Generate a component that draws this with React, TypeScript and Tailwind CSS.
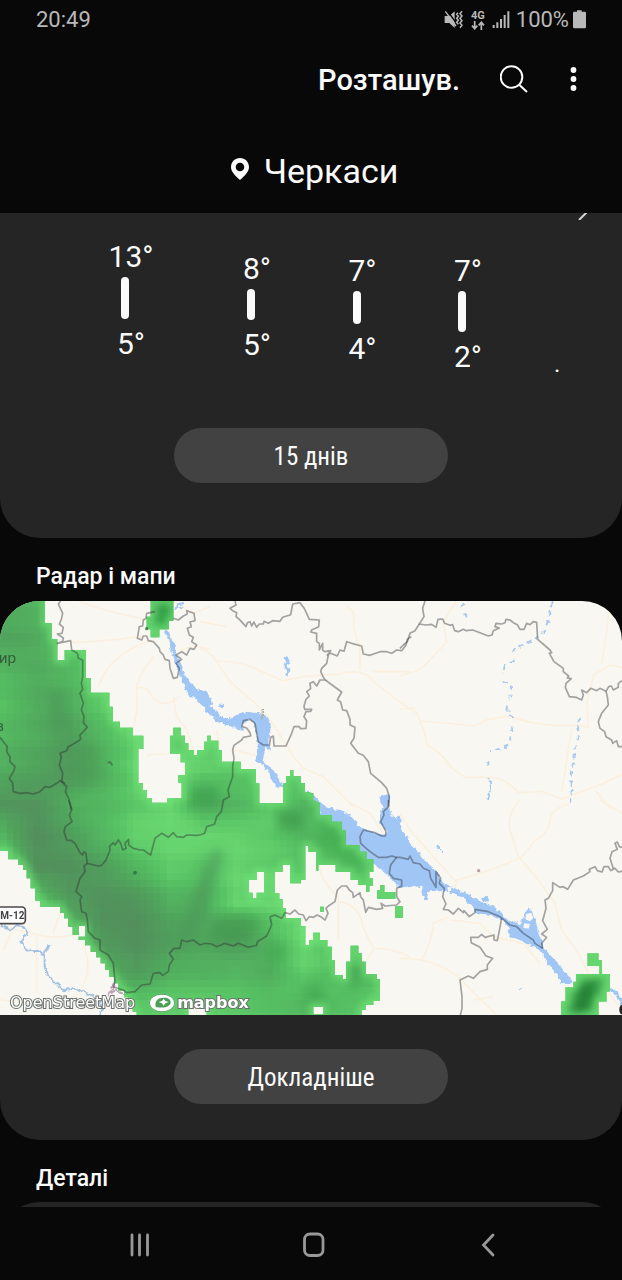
import React from "react";

type Day = { high: string; low: string; offset: string; bar: string };

const days: Day[] = [
  { high: "13°", low: "5°", offset: "pt-7", bar: "h-[42px]" },
  { high: "8°", low: "5°", offset: "pt-10", bar: "h-[31px]" },
  { high: "7°", low: "4°", offset: "pt-[42px]", bar: "h-[33px]" },
  { high: "7°", low: "2°", offset: "pt-[42px]", bar: "h-[41px]" },
];

function StatusBar() {
  return (
    <div className="flex h-10 items-center justify-between pr-9 pl-9 text-[22px] leading-6 text-[#b9b9b9]">
      <span>20:49</span>
      <div className="flex items-center gap-[6px]">
        <svg width="20" height="20" viewBox="0 0 60 60" fill="#b9b9b9" aria-label="Вібрація">
          <path d="M2 18h14l16-14v50L16 39H2z" />
          <path d="M9 1l32 44" stroke="#080808" strokeWidth="4" />
          <path d="M4 4l32 44" fill="none" stroke="#b9b9b9" strokeWidth="4" />
          <path d="M42 8l-4 5 5 6-5 6 5 6-5 6 5 6M54 4l-6 7 6 7-6 7 6 7-6 7 6 7-6 7" fill="none" stroke="#b9b9b9" strokeWidth="4.500" />
        </svg>
        <span className="flex w-4 flex-col items-center text-[11px] leading-[10px] font-bold">
          4G
          <svg width="14" height="9" viewBox="0 0 42 27" fill="none" stroke="#b9b9b9" strokeWidth="5">
            <path d="M11 0v23M3 14l8 9 8-9M31 27V4M23 13l8-9 8 9" />
          </svg>
        </span>
        <svg width="18" height="20" viewBox="0 0 54 60" fill="#b9b9b9" aria-label="Сигнал">
          <path d="M2 45h6v9H2zM13 37h6v17h-6zM24 27h6v27h-6zM35 15h6v39h-6zM46 4h6v50h-6z" />
        </svg>
        <span className="flex items-center gap-1">
          100%
          <svg width="13" height="20" viewBox="0 0 39 60" fill="#b9b9b9" aria-label="Батарея">
            <path d="M4 5h8V1h14v4h9q4 0 4 4v42q0 4-4 4H4q-4 0-4-4V9q0-4 4-4z" />
          </svg>
        </span>
      </div>
    </div>
  );
}

function Header() {
  return (
    <header className="bg-[#080808]">
      <StatusBar />
      <div className="flex h-20 items-center justify-end pr-8">
        <button className="mr-10 text-[29px] leading-8 font-medium">Розташув.</button>
        <button aria-label="Пошук" className="mr-7">
          <svg width="30" height="30" viewBox="0 0 30 30" fill="none" stroke="#fafafa" strokeWidth="2">
            <circle cx="11.500" cy="12" r="10.800" />
            <path d="M19.200 19.700l7.800 7.300" />
          </svg>
        </button>
        <button aria-label="Більше">
          <svg width="32" height="32" viewBox="0 0 32 32" fill="#fafafa">
            <circle cx="15.500" cy="6" r="2.900" />
            <circle cx="15.500" cy="15" r="2.900" />
            <circle cx="15.500" cy="24" r="2.900" />
          </svg>
        </button>
      </div>
      <div className="flex h-[93px] items-center justify-center gap-[14px] pt-2 pl-[6px]">
        <svg width="20" height="24" viewBox="0 0 20 24" fill="#fafafa" className="mb-1">
          <path fillRule="evenodd" d="M10 1c5.100 0 9 3.900 9 9 0 4.600-3.500 8-9 13-5.500-5-9-8.400-9-13 0-5.100 3.900-9 9-9zm0 4.700a4.300 4.300 0 1 0 0 8.600 4.300 4.300 0 0 0 0-8.600z" />
        </svg>
        <h1 className="text-[34px] leading-10">Черкаси</h1>
      </div>
    </header>
  );
}

const pill =
  "mx-auto flex h-[55px] w-[44%] items-center justify-center rounded-full bg-[#424242] pt-[2px] font-['Roboto_Condensed',Roboto,sans-serif] text-[25px] leading-7";

const sectionTitle = "px-9 text-[23px] leading-7 font-medium";

function Forecast() {
  return (
    <section className="relative rounded-b-[40px] bg-[#252525] pb-[55px]">
      <svg className="absolute top-0 right-[34px]" width="10" height="7" viewBox="0 0 10 7">
        <path d="M1 7L9 -1" stroke="#d5d5d5" strokeWidth="2" />
      </svg>
      <div className="grid h-[215px] grid-cols-[146fr_106fr_105fr_106fr_101fr] pl-[58px]">
        {days.map((d, i) => (
          <div key={i} className={`flex flex-col items-center text-[30px] leading-8 ${d.offset}`}>
            <span>{d.high}</span>
            <span className={`mt-1 mr-3 mb-[9px] w-2 rounded-full bg-[#fafafa] ${d.bar}`} />
            <span>{d.low}</span>
          </div>
        ))}
        <span className="pt-[139px] pl-[33px] text-2xl leading-6">.</span>
      </div>
      <button className={pill}>15 днів</button>
    </section>
  );
}

/* Map geometry: drawn on 3x tiles with origins at 0/600/1200 by 0/600. */
const shift = (dx: number, dy: number, pts: string) =>
  pts
    .trim()
    .split(/\s+/)
    .map((p) => {
      const [x, y] = p.split(",").map(Number);
      return `${x + dx},${y + dy}`;
    })
    .join(" ");

const rain = [
  "-80,-80",
  shift(0, 0, "135,-80 135,70 155,70 155,118 172,118 172,180 194,180 194,150 258,150 258,235 272,235 272,278 328,278 328,320 338,320 338,365 360,365 360,383 398,383 398,407 430,407 430,447 415,447 415,550 428,550 428,570 440,570 440,595 455,595 455,608 502,608 502,595 545,595 545,548 535,548 535,525 555,525 555,487 542,487 542,462 510,462 510,407 520,407 520,383 542,383 542,407 555,407 555,430 565,430 565,450 582,450 582,465 592,465 592,450 612,450 612,425 622,425 622,407 633,407 633,422 655,422"),
  shift(600, 0, "55,450 66,450 66,485 122,485 122,508 168,508 168,550 178,550 178,610 250,610 250,550 258,550 258,528 270,528 270,510 280,510 280,528 302,528 302,550 315,550 315,575 340,580 340,600"),
  shift(600, 600, "360,10 360,45 395,45 395,65 425,65 425,90 437,90 437,135 480,135 480,155 500,155 500,178 520,178 520,215 508,215 508,235 518,235 518,258 508,258 508,275 498,275 498,255 475,255 475,240 452,240 452,215 407,215 407,195 355,195 355,213 348,213 348,155 325,155 325,137 316,137 316,240 303,240 303,250 270,250 270,195 248,195 248,215 225,215 225,280 238,280 238,298 248,298 248,325 258,325 258,355 303,355 303,378 316,378 316,435 328,435 328,420 340,420 340,398 360,398 360,420 382,420 382,440 395,440 395,480 405,480 405,525 428,525 428,538 438,538 438,485 452,485 452,437 475,437 475,460 485,460 485,485 497,485 497,522 530,522 530,538 540,538 540,603 520,603 520,615 497,615 497,630 485,630 485,720"),
  shift(0, 600, "410,720 410,635 398,635 398,615 385,615 385,592 372,592 372,572 355,572 355,550 342,550 342,530 328,530 328,510 315,510 315,490 302,490 302,472 288,472 288,455 272,455 272,436 255,436 255,420 236,420 236,405 218,405 218,380 205,380 205,355 192,355 192,338 180,338 180,320 120,320 120,302 105,302 105,265 92,265 92,235 80,235 80,210 70,210 70,195 55,195 55,178 25,178 25,153 -80,153"),
].join(" L");

const holes =
  "M747,840 770,840 770,815 792,815 792,878 770,878 770,895 758,895 758,878 747,878Z M236,978 256,978 256,1010 236,1010Z M565,1226 580,1226 580,1214 592,1214 592,1226 620,1226 620,1250 565,1250Z M940,1220 970,1220 970,1242 940,1242Z";

const specks =
  "M1132,870 1140,870 1140,855 1153,855 1153,876 1186,876 1186,896 1132,896Z M1186,918 1208,918 1208,954 1186,954Z M960,920 972,920 972,936 960,936Z M452,0 520,0 520,62 506,62 506,88 478,88 478,112 452,112 452,88 440,88 440,50 452,50Z M1762,1060 1796,1060 1796,1080 1806,1080 1806,1122 1830,1122 1830,1175 1820,1175 1820,1205 1796,1205 1796,1250 1683,1250 1683,1204 1696,1204 1696,1162 1720,1162 1720,1145 1728,1145 1728,1122 1798,1122 1798,1098 1762,1098Z";

/* Rain intensity (0 light, 9 heavy), one sample every 100 map units. */
const intensity = [
  [5, 4, 3, 2, 3, 6, 3, 3, 3, 3, 3, 3],
  [6, 5, 2, 2, 2, 3, 2, 2, 2, 2, 2, 2],
  [4, 5, 4, 2, 2, 2, 2, 2, 2, 2, 2, 2],
  [3, 5, 5, 2, 1, 2, 2, 2, 2, 2, 2, 2],
  [4, 5, 7, 4, 1, 3, 2, 1, 1, 1, 1, 1],
  [5, 6, 8, 5, 1, 1, 2, 2, 2, 3, 1, 1],
  [8, 8, 5, 4, 2, 1, 5, 4, 2, 4, 3, 1],
  [4, 9, 7, 4, 1, 1, 1, 1, 2, 4, 4, 3],
  [1, 8, 9, 7, 4, 2, 3, 1, 2, 3, 3, 3],
  [1, 2, 7, 9, 8, 5, 5, 1, 1, 2, 3, 3],
  [1, 1, 4, 8, 9, 7, 6, 7, 4, 1, 3, 3],
  [1, 1, 1, 5, 7, 5, 5, 4, 5, 2, 3, 4],
  [1, 1, 1, 1, 2, 2, 2, 2, 3, 4, 3, 2],
  [1, 1, 1, 1, 2, 2, 2, 2, 3, 4, 3, 2],
];

const ramp = [
  [112, 224, 118],
  [86, 192, 99],
  [80, 164, 92],
  [82, 143, 92],
];

const CELL = 20;

function rainColor(x: number, y: number) {
  const gx = Math.min(x / 100, 10.99);
  const gy = Math.min(y / 100, 12.99);
  const ix = Math.floor(gx);
  const iy = Math.floor(gy);
  const fx = gx - ix;
  const fy = gy - iy;
  const top = intensity[iy][ix] * (1 - fx) + intensity[iy][ix + 1] * fx;
  const bottom = intensity[iy + 1][ix] * (1 - fx) + intensity[iy + 1][ix + 1] * fx;
  const banding = Math.sin(x * 12.9) * 0.22 + Math.sin(y * 7.3) * 0.22;
  const v = Math.max(0, Math.min(8.99, top * (1 - fy) + bottom * fy + banding)) / 3;
  const k = Math.floor(v);
  const f = v - k;
  const rgb = ramp[k].map((c, i) => Math.round(c * (1 - f) + ramp[k + 1][i] * f));
  return `rgb(${rgb.join(",")})`;
}

const cells: { x: number; y: number; fill: string }[] = [];
for (let y = 0; y < 1260; y += CELL) {
  for (let x = 0; x < 1220; x += CELL) {
    cells.push({ x, y, fill: rainColor(x, y) });
  }
}

const upperRiver = [
  shift(0, 0, "495,85 505,95 520,125 530,165 545,195 555,225 575,255"),
  shift(600, 0, "0,270 15,275 30,295 38,312 28,318 45,330 65,350 85,358 110,345 140,335 175,340 200,352 212,375 208,430 212,450 195,440 192,465 188,485 205,500 225,515 240,545 258,550 255,563 232,563 218,545 205,515 185,492 165,485 170,460 175,440 168,400 165,370 145,358 130,370 130,390 100,385 80,375 50,365 25,340 0,310"),
  shift(0, 0, "580,290 562,285 550,250 535,215 525,185 512,150 508,120 495,95"),
].join(" ");

const reservoir = [
  shift(600, 600, "315,-30 335,-20 355,0 365,10 385,25 420,30 450,45 475,75 500,90 540,102 558,105 560,95 540,70 540,45 548,20 538,-5 548,-18 570,-15 568,15 570,40 590,60 600,45"),
  shift(1200, 600, "4,90 14,100 30,130 55,155 75,185 110,215 125,245 155,260 185,275 210,285 240,305 280,318 300,335 325,365 350,365 370,355 380,330 388,320 400,345 408,365 415,400 430,440 450,465 480,495 505,525 518,545 510,552 485,552 470,520 445,495 425,455 400,440 370,425 325,408 330,385 305,360 270,345 230,340 215,315 180,290 160,280 130,270 105,272 85,275 80,300 72,300 65,262 40,258 15,265"),
  shift(600, 600, "590,258 565,225 520,190 480,160 437,135 425,100 395,70 360,45 325,0"),
].join(" ");

type Tile = { at: string; lines: string[] };

const roads: Tile[] = [
  {
    at: "translate(0 0)",
    lines: [
      "M230 0q60 25 115 38t90 20M215 128q100-4 210-18M295 260q20-60 70-95t90-42M460 170q-50 60-50 100 4 70-10 115M410 265q25-10 40 15t35 28q30 8 55-22M520 290l10 60 30 40 25 70M440 468q30-10 60-5M510 0l70 40 50-20M540 150l50-12 40 10",
    ],
  },
  {
    at: "translate(600 0)",
    lines: [
      "M0 145q30 10 50 38 70 2 110 20t90 40q40-12 100-16l70-5q30-10 60-4t40 26q40 30 70 55l35 25h20M50 185l40 60 70 60 40 40 40 60 40 65 30 35 60 25 50 50 40 40M0 65l80 15M440 20q30 10 20 60l20 70v60M520 215h110M50 390l10 50M100 450l80 20",
    ],
  },
  {
    at: "translate(1200 0)",
    lines: [
      "M0 226q60-10 85-40t55-60l-10-60 40-66M0 328q50-10 60 35 80 5 165 15l40-20 70-10q30 20 130 28h65l40 5M60 365q20 40 20 70 40 20 60 50t60 48q70-5 100 5t55 40q40 0 70-5l60 25q50-20 120-45l62-30M515 385l-20 130-10 60M565 385l-4-80 20-80 50-30 35 8M625 0v60l-20 130M585 570l50 60",
    ],
  },
  {
    at: "translate(0 600)",
    lines: ["M0 380q60 10 110 24t120 0M110 400v180M180 340l-20 60M10 450l25-55M250 430q20 60 10 100t-50 70M0 600l180 20"],
  },
  {
    at: "translate(600 600)",
    lines: ["M355 190q10 60 60 100v130M420 305q60 10 70 80l30 60q60 0 110 25M500 480l20-30M450 10l60 30 40 60"],
  },
  {
    at: "translate(1200 600)",
    lines: [
      "M0 40l30 50 70 80 65 72q110-30 200-70l40-50q40-20 45-60t60-50M360 0q-40 40-30 90l25 80 60 70 50 70 20 80 50 70 30 60M0 475q60 0 100 15t75 40q40 45 115 115M65 480q30-50 35-110l45-20M150 360l90 10 40 40 90 20 50 60M220 600l60-10M600 0l66 40M620 570l46 60M170 240l-8 40",
    ],
  },
];

const borders: Tile[] = [
  {
    at: "translate(0 0)",
    lines: [
      "182,3 175,12 188,40 184,58 178,72 190,82 186,100 172,102 190,114 188,124 172,130 212,122 215,150 232,160 235,175 248,180 248,230 244,250 248,268 240,280 250,310 244,330 252,350 250,368 262,382 240,405 242,418 220,432 205,440 200,452 180,460 184,470 178,495 188,520 185,545 200,560 196,575 206,595 215,630",
      "0,412 22,440 20,455 30,470 30,485 45,500 42,512 28,535 38,550 40,575 60,580 80,578 100,582 120,575 135,560 150,562 170,550 180,542 195,550",
      "465,35 440,40 438,55 430,60 428,78 418,80 412,115 425,120 430,108 440,108 445,122 460,125 478,145 480,155 490,165 495,178 508,182 510,205 520,235 532,232 538,205 528,190 545,178 528,165 545,155 560,165 570,145 582,148 590,135 575,125 580,112 568,105 562,85 574,80 570,66 585,62 582,40 560,32 562,42 550,48 535,60 520,55",
      "323,488 331,486 337,496",
    ],
  },
  {
    at: "translate(600 0)",
    lines: [
      "105,3 108,15 90,25 98,32 110,38 108,50 118,58 138,80 142,68 150,65 155,78 162,66 170,82 178,72 190,72 192,64 205,70 218,62 240,64 248,52 272,44 278,12 300,8 312,24 320,40 328,58 358,60 356,80 335,90 332,96 350,100 350,125 358,130 358,150 368,130 368,150 374,155 392,152 382,165 392,160 412,168 420,150 432,154 440,125 455,130 485,138 490,162 510,166 540,155 560,155 575,160 590,150 605,152 618,135 622,118 634,110",
      "385,165 380,190 365,205 362,215 372,235 376,240 360,240 350,258 340,245 330,250 332,266 320,275 328,288 318,298 312,318 314,328 335,328 332,334 318,335 312,350 320,362 318,385 302,386 298,380 282,380 275,400 258,438 222,438 220,408 212,412 208,435 190,435 175,425 170,400 165,370 150,358 130,362 126,380 140,384 150,398 152,408 130,412 125,420 102,436 98,450 102,475 98,500 98,530 84,570 88,590 70,600 64,635 50,650 44,672 20,680 14,700 0,705",
      "376,240 392,252 425,276 412,300 422,306 428,330 440,332 450,358 450,375 465,382 462,415 452,430 475,460 490,466 505,485 512,520 545,548 560,565 568,590 565,620",
    ],
  },
  {
    at: "translate(1200 0)",
    lines: [
      "75,3 68,25 72,50 58,72 78,75 95,73 108,82 114,58 128,57 134,70 150,76 158,74 164,92 175,95 190,88 198,92 218,90 240,98 265,108 276,105 280,92 298,84 285,80 288,70 305,72 315,68 318,58 330,60 340,68 352,74 360,88 372,88 380,70 390,74 400,65 410,67 413,118 450,150 455,158 448,160 462,185 490,205 490,215 506,228 502,234 514,236 498,250 496,262 508,290 528,292 545,300 550,285 545,270 560,278 572,265 590,272 600,265 618,274 626,260 634,258 640,270 655,262 655,250 666,242",
      "58,72 45,92 30,100 22,125 10,135 0,145",
      "618,274 622,290 625,315 605,340 595,365 600,385 614,395 618,410 635,420 638,430 650,422 655,440 666,440",
    ],
  },
  {
    at: "translate(0 600)",
    lines: [
      "206,0 215,30 208,45 216,65 196,80 192,95 200,120 215,122 225,130 240,158 248,165 252,155 258,160 262,190 295,198 305,196 318,180 330,150 328,140 340,128 345,135 355,120 362,130 368,150 378,145 375,130 386,118 386,135 400,145 420,150 430,150 452,165 465,115 485,100 505,112 520,98 530,110 550,112 560,105 590,106 600,105",
      "262,190 252,198 255,215 240,235 228,275 245,290 240,300 245,335 258,340 262,360 265,395 285,415 300,420 300,450 325,465 340,490 345,545 340,560 370,570 380,578 405,575 425,555 450,552 460,520 480,518 488,526 505,515 508,495 520,478 508,460 522,445 540,445 545,420 560,425 580,420 600,435",
    ],
  },
  {
    at: "translate(600 600)",
    lines: [
      "0,435 15,430 35,432 50,440 75,430 100,438 115,430 145,442 170,436 172,425 200,408 215,375 210,350 225,345 245,355 255,338 270,342 285,330 296,342 310,345 318,362 328,350 340,352 352,345 365,352 375,360 384,340 378,325 385,318 405,305 412,270 425,258 440,258 448,270 458,278 460,292 480,278 482,290 490,300 497,337 505,322 530,328 548,325 543,310 555,318 590,315 600,305 590,290 590,265 605,258 605,240 580,235 568,220 572,195 590,172",
      "565,0 566,20 550,35 552,45 542,65 558,95 556,108 545,108 525,98 490,90 480,110 482,130 510,155 535,172 560,172 575,168 590,172 600,172",
    ],
  },
  {
    at: "translate(1200 600)",
    lines: [
      "0,172 25,178 30,168 40,188 60,192 70,205 88,212 92,235 108,262 108,215 122,235 118,250 133,265 128,290 138,312 130,328 145,330 160,342 175,325 190,338 192,332 208,350 225,338 225,328 265,335 300,350 330,375 350,380 370,400 400,420 405,430 428,445",
      "428,445 425,430 440,412 425,402 442,388 428,362 438,325 435,300 445,295 458,272 458,248 480,262 490,260 503,268 520,240 550,228 570,215 568,208 585,200 592,212 606,216 612,200 625,200 632,212 645,205 655,216 666,214",
      "640,206 630,175 636,155 652,148 645,130 652,126 658,140 666,142",
      "305,355 298,392 292,422 282,420 282,405 255,412 245,403 235,412 212,412 214,428 240,442 258,468 278,475 262,495 262,508 240,515 220,535 205,528 180,540 186,590 186,625 180,650",
    ],
  },
];

function RadarMap() {
  const rainPath = `M${rain}Z ${holes} ${specks}`;
  return (
    <svg className="block w-full" viewBox="0 3 1866 1242" role="img" aria-label="Радар опадів">
      <defs>
        <clipPath id="rain">
          <path d={rainPath} clipRule="evenodd" />
        </clipPath>
        <filter id="soft" x="-50%" y="-50%" width="200%" height="200%">
          <feGaussianBlur stdDeviation="16" />
        </filter>
        <filter id="edge">
          <feGaussianBlur stdDeviation="9" />
        </filter>
        <filter id="ragged" x="-5%" y="-5%" width="110%" height="110%">
          <feTurbulence type="fractalNoise" baseFrequency="0.07" numOctaves="2" seed="4" />
          <feDisplacementMap in="SourceGraphic" scale="16" xChannelSelector="R" yChannelSelector="G" />
        </filter>
      </defs>
      <rect width="1866" height="1250" fill="#f8f7f2" />
      <g fill="none" stroke="#fbf0de" strokeWidth="5" strokeLinejoin="round">
        {roads.map((t) => (
          <g key={t.at} transform={t.at}>
            {t.lines.map((d) => (
              <path key={d} d={d} />
            ))}
          </g>
        ))}
      </g>

      <g fill="#9fc6f5" filter="url(#ragged)">
        <path d={`M${upperRiver}Z`} />
        <path d={`M${reservoir}Z`} />
        <path d="M658 310l14 2-4 10-10-2zM1444 890l18 2 2 12-18 2z" />
        <path d="M785 328l4-2v34h-5z" fill="#aaa" />
      </g>
      <g fill="#f8f7f2">
        <path d="M1578 942l16-4 6 16-10 10-14-6zM1572 970l18 2-4 14-16-2zM1342 862l10-2 2 12-10 2zM1556 962l10 4-6 10-8-4z" />
      </g>
      <g fill="none" stroke="#9fc6f5" strokeWidth="6" filter="url(#ragged)">
        <path d="M858 170l6 16-6 14 8 14-6 12" strokeWidth="9" />
        <path d="M525 28l10-14 16-6M540 20l8 6" />
        <path
          d="M1656 6l-6 26-10 44-8 22-38 24-50 22-8 10M1544 182l-30 14-6 24M1508 246l24 8 2 24-6 20M1518 318l10 26 16 12M1534 380l-4 50-20 14-40 10M1462 484v12M1394 38l6 14M1380 20l20-8M1742 354l-12 22 8 28-14 40 0 40-12 38 4 44-6 40"
          strokeDasharray="16 12"
          stroke="#a9c8ee"
        />
        <path d="M1468 534l4 26-8 42M1310 738l14 12 4 8M1558 1168l8-8" strokeWidth="5" />
        <path d="M1820 1165l20 8 26 30v20" strokeWidth="10" />
      </g>
      <g fill="none" stroke="#a3c1e2" strokeWidth="6" filter="url(#ragged)">
        <path d="M0 975l30 16 20-15 20 2 10 22-16 22 10 20 20 12 24-2 16 16v30l12 30 20 20 24 22 36-4 30 12 24 10 20 22 6 20-8 20M130 1068l16-34" />
        <path d="M330 1180l14-30M325 1185l20-14 30 12" stroke="#bda5b8" />
      </g>

      <g clipPath="url(#rain)">
        <rect x="0" y="0" width="1866" height="1250" fill="#5bc665" />
        <g shapeRendering="crispEdges">
          {cells.map((c) => (
            <rect key={`${c.x}-${c.y}`} x={c.x} y={c.y} width={CELL} height={CELL} fill={c.fill} />
          ))}
        </g>
        <g filter="url(#soft)">
          <path d="M640 750l30 0-50 180-40 100-50-10 40-110z" fill="#4b9858" opacity="0.7" />
          <path d="M570 560l80 0 10 60-90 5z" fill="#40a04f" opacity="0.8" />
          <path d="M830 630l80 0 5 60-80 0z" fill="#3f9a4e" opacity="0.8" />
          <path d="M640 960l90-15 60 20-50 60-110-5z" fill="#45994f" opacity="0.7" />
          <path d="M145 270l50 0 10 110-50 20z" fill="#4c9958" opacity="0.7" />
          <path d="M210 440l80-10 10 110-80 20z" fill="#4c9958" opacity="0.5" />
          <path d="M800 1030l50 0 0 60-50 0zM1045 1070l40 20-10 80-30 0zM900 1160l60-20 20 60-50 20z" fill="#43a551" opacity="0.7" />
          <path d="M970 660l70 40 60 110-60-20-90-60z" fill="#42ae4f" opacity="0.7" />
          <path d="M1735 1150l70-20-40 110-60 20z" fill="#238035" />
          <path d="M490 0h20v80h-40z" fill="#239a3c" />
        </g>
        <path d={rainPath} fill="none" stroke="#70e577" strokeWidth="24" opacity="0.6" filter="url(#edge)" />
      </g>

      <g fill="none" stroke="#302c32" strokeOpacity="0.42" strokeWidth="5" strokeLinejoin="round">
        {borders.map((t) => (
          <g key={t.at} transform={t.at}>
            {t.lines.map((d) => (
              <polyline key={d} points={d} />
            ))}
          </g>
        ))}
      </g>
      <g fill="#28733c" opacity="0.8">
        <circle cx="405" cy="818" r="6" />
        <circle cx="440" cy="86" r="5" />
        <circle cx="1436" cy="812" r="5" fill="#a48d92" />
      </g>
      <path d="M1866 1215q-8 2-8 14t8 14z" fill="#222" />
      <g className="font-[Roboto,sans-serif]" fill="#315f3b" fontSize="46">
        <text x="-4" y="190">ир</text>
        <text x="-14" y="392">в</text>
      </g>
      <rect x="-20" y="921" width="96" height="50" rx="10" fill="#fff" stroke="#4b4b4b" strokeWidth="5" />
      <text x="1" y="957" className="font-[Roboto,sans-serif] font-bold" fontSize="30" fill="#444">М-12</text>
    </svg>
  );
}

function Attribution() {
  const outline = "text-white [-webkit-text-stroke:2px_#6b726d] [paint-order:stroke_fill]";
  return (
    <div className="absolute bottom-[2px] left-[10px] flex items-center gap-[14px] font-['DejaVu_Sans',sans-serif] text-[16px] leading-5">
      <a href="#osm" className={outline}>OpenStreetMap</a>
      <a href="#mapbox" className={`flex items-center gap-[2px] font-bold ${outline}`}>
        <svg width="26" height="18" viewBox="0 0 78 54">
          <ellipse cx="39" cy="27" rx="36" ry="25" fill="#fff" stroke="#65846b" strokeWidth="3" />
          <path d="M20 39c-4-18 6-28 25-28 13 0 20 6 20 14 0 13-18 19-45 14z" fill="#4d9f57" />
          <path d="M44 14l5 7 10 3-10 4-5 7-5-7-10-4 10-3z" fill="#fff" />
        </svg>
        <span>mapbox</span>
      </a>
    </div>
  );
}

function BottomNav() {
  return (
    <nav className="grid h-[73px] grid-cols-3 items-center justify-items-center bg-[#080808] pr-[47px] pl-[53px]">
      <button aria-label="Останні">
        <svg width="28" height="28" viewBox="0 0 28 28" stroke="#989898" strokeWidth="2.800" strokeLinecap="round">
          <path d="M6 5v20M13.500 5v20M21.500 5v20" />
        </svg>
      </button>
      <button aria-label="Головний екран">
        <svg width="28" height="28" viewBox="0 0 28 28" fill="none" stroke="#989898" strokeWidth="2.800">
          <rect x="4.500" y="4" width="18.500" height="21.500" rx="5.500" />
        </svg>
      </button>
      <button aria-label="Назад">
        <svg width="28" height="28" viewBox="0 0 28 28" fill="none" stroke="#989898" strokeWidth="2.800" strokeLinecap="round">
          <path d="M19 5L9.500 15L19 25" />
        </svg>
      </button>
    </nav>
  );
}

export default function App() {
  return (
    <div className="min-h-screen bg-[#080808] font-[Roboto,sans-serif] text-[#fafafa]">
      <Header />
      <main>
        <Forecast />
        <h2 className={`${sectionTitle} pt-[25px] pb-[10px]`}>Радар і мапи</h2>
        <section className="overflow-hidden rounded-[40px] bg-[#252525] pb-9">
          <div className="relative mb-[34px]">
            <RadarMap />
            <Attribution />
          </div>
          <button className={pill}>Докладніше</button>
        </section>
        <h2 className={`${sectionTitle} pt-[25px] pb-[9px]`}>Деталі</h2>
        <section className="h-[5px] overflow-hidden">
          <div className="h-20 rounded-t-[40px] bg-[#252525]" />
        </section>
      </main>
      <BottomNav />
    </div>
  );
}
